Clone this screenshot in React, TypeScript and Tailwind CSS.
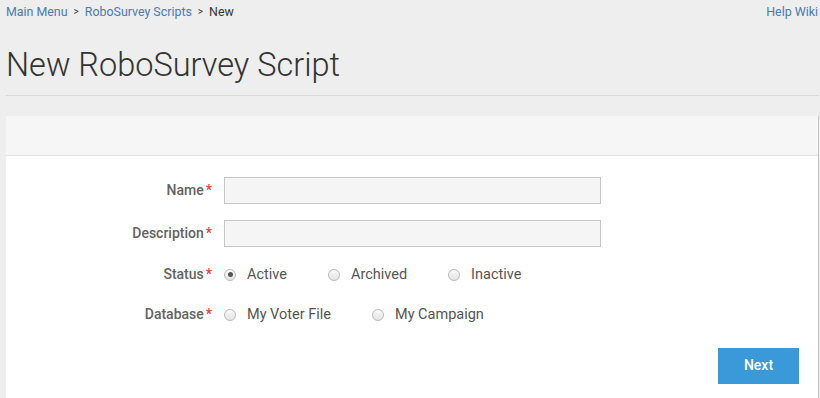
import { useState } from "react";

const Label = ({ text }: { text: string }) => (
  <div className="w-[218px] shrink-0 pr-[12px] text-right text-[14px] font-medium text-[#636363]">
    {text}
    <span className="ml-[2px] text-[#e2413b]">*</span>
  </div>
);

const Radio = ({
  label,
  checked,
  onClick,
}: {
  label: string;
  checked: boolean;
  onClick: () => void;
}) => (
  <label onClick={onClick} className="mr-[41px] flex cursor-pointer items-center">
    <span className="flex h-[12px] w-[12px] items-center justify-center rounded-full border border-[#b9b9b9] bg-gradient-to-b from-[#fafafa] to-[#e4e4e4]">
      {checked && <span className="h-[5px] w-[5px] rounded-full bg-[#555]" />}
    </span>
    <span className="ml-[11px] text-[14.5px] text-[#555]">{label}</span>
  </label>
);

export default function App() {
  const [name, setName] = useState("");
  const [description, setDescription] = useState("");
  const [status, setStatus] = useState("Active");
  const [database, setDatabase] = useState("");

  return (
    <div className="h-[398px] w-[820px] overflow-hidden bg-[#eeeeee] font-['Roboto',sans-serif]">
      {/* breadcrumbs */}
      <div className="flex h-[24px] items-center justify-between pl-[6px] pr-[2px] text-[12.4px]">
        <div className="flex items-center text-[#4a7ab5]">
          <a href="#">Main Menu</a>
          <span className="mx-[6px] text-[10px] text-[#333]">&gt;</span>
          <a href="#">RoboSurvey Scripts</a>
          <span className="mx-[6px] text-[10px] text-[#333]">&gt;</span>
          <span className="text-[#333]">New</span>
        </div>
        <a href="#" className="text-[#4a7ab5]">
          Help Wiki
        </a>
      </div>

      <div className="pl-[6px] pr-[1px]">
        <h1 className="mt-[21px] text-[32.5px] font-light leading-[40px] text-[#333]">
          New RoboSurvey Script
        </h1>
        <div className="mt-[10px] border-b border-[#d9d9d9]" />

        <div className="mt-[20px] border-r border-[#c4c4c4] bg-white pb-[20px]">
          <div className="h-[40px] border-b border-[#e2e2e2] bg-[#f6f6f6]" />
          <form className="pt-[21px]" onSubmit={(e) => e.preventDefault()}>
            <div className="flex items-center">
              <Label text="Name" />
              <input
                value={name}
                onChange={(e) => setName(e.target.value)}
                className="h-[27px] w-[377px] border border-[#c6c6c6] bg-[#f5f5f5] px-2 text-[14px] outline-none"
              />
            </div>
            <div className="mt-[16px] flex items-center">
              <Label text="Description" />
              <input
                value={description}
                onChange={(e) => setDescription(e.target.value)}
                className="h-[27px] w-[377px] border border-[#c6c6c6] bg-[#f5f5f5] px-2 text-[14px] outline-none"
              />
            </div>
            <div className="mt-[17px] flex items-center">
              <Label text="Status" />
              {["Active", "Archived", "Inactive"].map((s) => (
                <Radio key={s} label={s} checked={status === s} onClick={() => setStatus(s)} />
              ))}
            </div>
            <div className="mt-[18px] flex items-center">
              <Label text="Database" />
              {["My Voter File", "My Campaign"].map((d) => (
                <Radio key={d} label={d} checked={database === d} onClick={() => setDatabase(d)} />
              ))}
            </div>
            <div className="mt-[22px] flex justify-end pr-[19px]">
              <button
                type="submit"
                className="h-[36px] w-[81px] bg-[#3a9ad9] text-[14px] font-medium text-white"
              >
                Next
              </button>
            </div>
          </form>
        </div>
      </div>
    </div>
  );
}
